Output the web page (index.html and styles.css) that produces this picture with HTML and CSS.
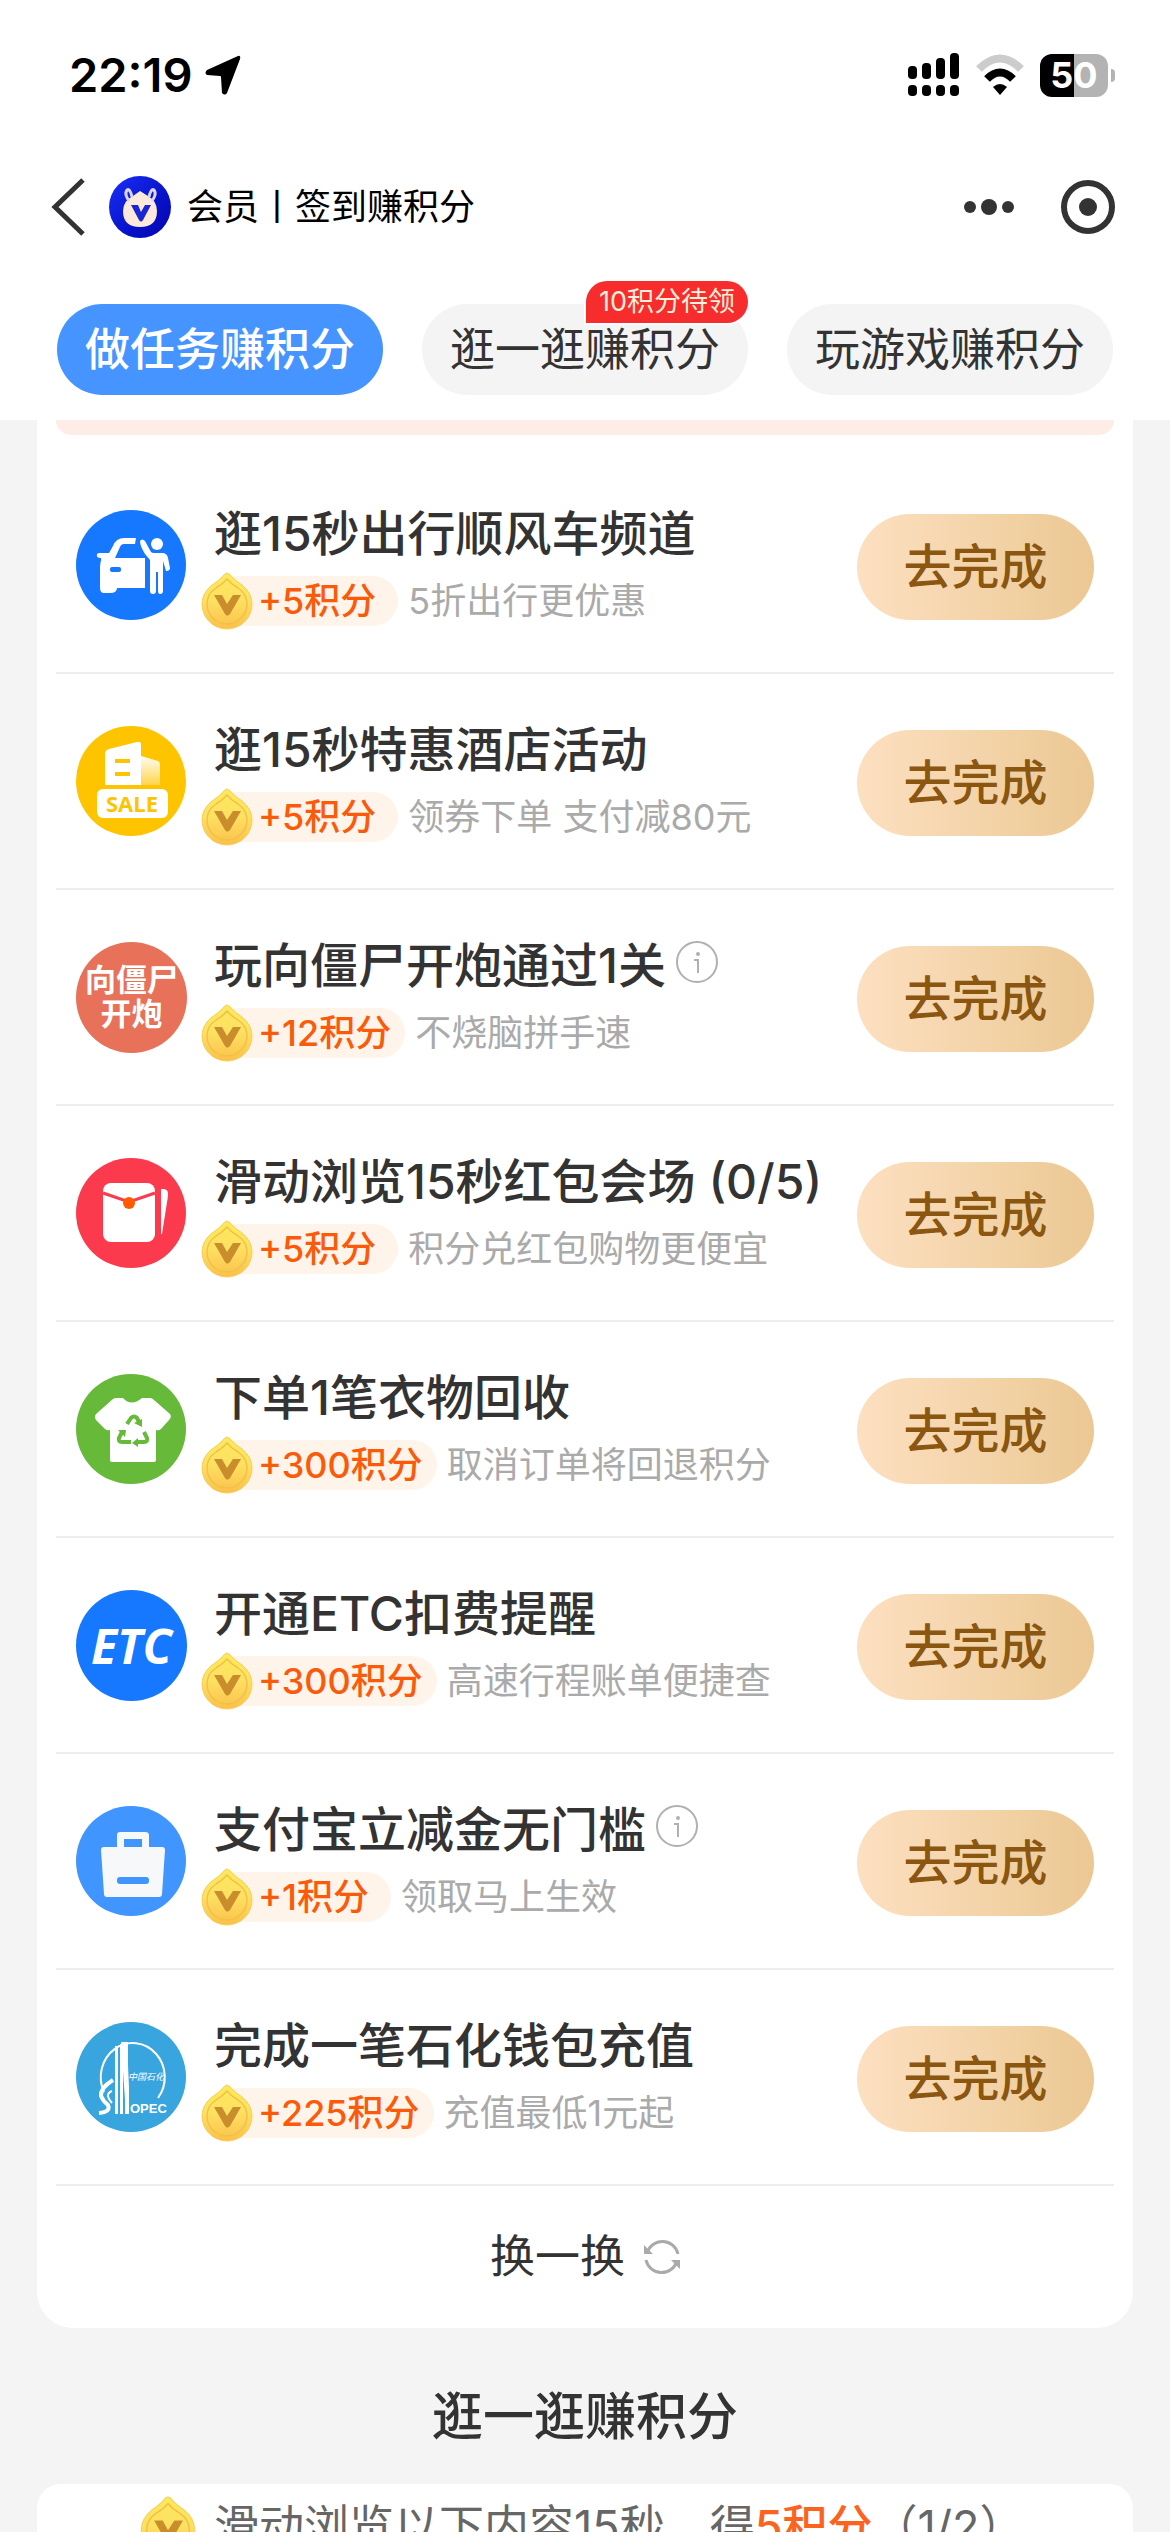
FILE: index.html
```html
<!DOCTYPE html>
<html lang="zh-CN">
<head>
<meta charset="utf-8">
<meta name="viewport" content="width=device-width, initial-scale=1">
<title>会员丨签到赚积分</title>
<link rel="stylesheet" href="styles.css">
</head>
<body>
<svg class="defs" aria-hidden="true">
  <defs>
    <linearGradient id="coinFill" x1="0" y1="0" x2="0" y2="1">
      <stop offset="0" stop-color="#fbe95c"/><stop offset="0.5" stop-color="#fce062"/><stop offset="1" stop-color="#fcc04a"/>
    </linearGradient>
    <linearGradient id="hotelWing" x1="0" y1="0" x2="0" y2="1">
      <stop offset="0" stop-color="#fff" stop-opacity="0.95"/><stop offset="1" stop-color="#fff" stop-opacity="0.3"/>
    </linearGradient>
    <linearGradient id="memberFill" x1="0" y1="0" x2="1" y2="1">
      <stop offset="0" stop-color="#1b30f8"/><stop offset="0.6" stop-color="#0711c8"/><stop offset="1" stop-color="#0508b0"/>
    </linearGradient>
    <symbol id="coin" viewBox="0 0 52 58">
      <path d="M26 1Q28 1 31 5Q35 9 41 13Q51 21 51 32A25 25 0 0 1 1 32Q1 21 11 13Q17 9 21 5Q24 1 26 1Z" fill="url(#coinFill)" stroke="#f6cf58" stroke-width="1"/>
      <path d="M26 7Q30 12 37 16Q46 22 46 32A20 20 0 0 1 6 32Q6 22 15 16Q22 12 26 7Z" fill="none" stroke="#f2c247" stroke-width="1.5"/>
      <path d="M13 23H21L26 32L32 23H40L29 42Q26 45 24 42Z" fill="#c98d2c"/>
    </symbol>
    <symbol id="info" viewBox="0 0 42 42">
      <circle cx="21" cy="21" r="20" fill="none" stroke="#b0b0b0" stroke-width="2"/>
      <circle cx="22" cy="13" r="2" fill="#b0b0b0"/><path d="M18 19H22V32" fill="none" stroke="#b0b0b0" stroke-width="2"/>
    </symbol>
  </defs>
</svg>

<header class="top">
  <div class="status">
    <div class="clock"><span>22:19</span>
      <svg class="arrow" viewBox="0 0 36 40" aria-hidden="true"><path d="M33 1Q36 0 35 4L22 38Q20 41 17 38L16 22Q16 21 15 21L2 20Q-1 18 2 15Z"/></svg>
    </div>
    <div class="signals">
      <svg class="cell" viewBox="0 0 52 44" aria-hidden="true">
        <rect x="0" y="13" width="9" height="13" rx="4"/><rect x="14" y="10" width="9" height="16" rx="4"/><rect x="28" y="5" width="9" height="21" rx="4"/><rect x="42" y="0" width="9" height="26" rx="4"/>
        <rect x="0" y="32" width="9" height="11" rx="4"/><rect x="14" y="32" width="9" height="11" rx="4"/><rect x="28" y="32" width="9" height="11" rx="4"/><rect x="42" y="32" width="9" height="11" rx="4"/>
      </svg>
      <svg class="wifi" viewBox="0 0 48 42" aria-hidden="true">
        <path d="M3 15Q24 -6 45 15" fill="none" stroke="#ccc" stroke-width="8"/>
        <path d="M11 25Q24 12 37 25" fill="none" stroke="#000" stroke-width="8"/>
        <path d="M17 33Q24 27 31 33L24 41Z"/>
      </svg>
      <div class="battery"><span>50</span></div>
    </div>
  </div>

  <div class="nav">
    <button class="icon-btn" aria-label="返回"><svg class="back" viewBox="0 0 34 58"><path d="M32 2L4 29L32 56" fill="none" stroke="#333" stroke-width="5"/></svg></button>
    <svg class="member" viewBox="0 0 62 62" aria-hidden="true">
      <circle cx="31" cy="31" r="31" fill="url(#memberFill)"/>
      <path d="M24 20L31 15L39 20Q48 25 48 35Q48 51 31 51Q14 51 14 35Q14 25 24 20Z" fill="#fbe9dc"/>
      <path d="M20 25Q15 18 18 14Q21 12 23 21M43 25Q48 18 45 14Q42 12 40 21" fill="none" stroke="#d9d6f4" stroke-width="3"/>
      <path d="M22 29H29L32 36L36 29H42L34 44Q32 47 30 44Z" fill="#1a25d4"/>
    </svg>
    <h1>会员丨签到赚积分</h1>
    <button class="icon-btn more" aria-label="更多"><svg viewBox="0 0 52 16"><circle cx="7" cy="8" r="6"/><circle cx="26" cy="8" r="8"/><circle cx="45" cy="8" r="6"/></svg></button>
    <button class="icon-btn target" aria-label="关闭"><svg viewBox="0 0 54 54"><circle cx="27" cy="27" r="24" fill="none" stroke="#333" stroke-width="6"/><circle cx="27" cy="27" r="9"/></svg></button>
  </div>

  <nav class="tabs">
    <button class="tab active">做任务赚积分</button>
    <button class="tab">逛一逛赚积分<span class="badge">10积分待领</span></button>
    <button class="tab">玩游戏赚积分</button>
  </nav>
</header>

<main>
  <section class="card tasks">
    <div class="banner"></div>
    <ul>
      <li class="task">
        <svg class="logo" viewBox="0 0 111 111" aria-hidden="true">
          <circle cx="55" cy="55" r="55" fill="#1677ff"/>
          <path d="M60 28H48Q40 28 37 36L33 43H24Q20 43 21 46Q21 48 26 48Q24 52 24 57V78Q24 83 28 83H34Q41 83 41 78H69V48H39L44 37Q45 34 48 34H59Z" fill="#fff"/>
          <path d="M25 48H66Q69 48 69 51V78H40L25 70Z" fill="#fff"/>
          <rect x="34" y="57" width="11" height="5" rx="2" fill="#1677ff"/>
          <circle cx="81" cy="34" r="6" fill="#fff"/>
          <path d="M64 31Q66 28 69 31L75 42Q76 43 78 43H86Q91 43 92 48L94 58Q94 61 90 61L87 51V81Q87 84 84 84Q82 84 82 81V62H80V81Q80 84 77 84Q74 84 74 81V50L69 44Q64 36 64 31Z" fill="#fff"/>
        </svg>
        <div class="body"><h2>逛15秒出行顺风车频道</h2><p><svg class="coin"><use href="#coin"/></svg><span class="chip short">+5积分</span><span class="desc">5折出行更优惠</span></p></div>
        <button class="go">去完成</button>
      </li>
      <li class="task">
        <svg class="logo" viewBox="0 0 111 111" aria-hidden="true">
          <circle cx="55" cy="55" r="55" fill="#fec400"/>
          <path d="M29 59V28Q29 24 33 23L61 16Q65 15 65 19V59Z" fill="#fff"/>
          <path d="M65 30L82 35Q84 36 84 38V59H65Z" fill="url(#hotelWing)"/>
          <path d="M39 35H54M39 48H54" stroke="#fec400" stroke-width="4"/>
          <rect x="21" y="63" width="71" height="29" rx="6" fill="#fff"/>
          <text x="56" y="86" text-anchor="middle" class="sale">SALE</text>
        </svg>
        <div class="body"><h2>逛15秒特惠酒店活动</h2><p><svg class="coin"><use href="#coin"/></svg><span class="chip short">+5积分</span><span class="desc">领券下单 支付减80元</span></p></div>
        <button class="go">去完成</button>
      </li>
      <li class="task">
        <div class="logo zombie"><span>向僵尸</span><span>开炮</span></div>
        <div class="body"><h2>玩向僵尸开炮通过1关<svg class="info"><use href="#info"/></svg></h2><p><svg class="coin"><use href="#coin"/></svg><span class="chip">+12积分</span><span class="desc">不烧脑拼手速</span></p></div>
        <button class="go">去完成</button>
      </li>
      <li class="task">
        <svg class="logo" viewBox="0 0 111 111" aria-hidden="true">
          <circle cx="55" cy="55" r="55" fill="#fb3a4e"/>
          <rect x="27" y="25" width="52" height="59" rx="8" fill="#fff"/>
          <path d="M27 35L53 44L79 35" fill="none" stroke="#fb3a4e" stroke-width="3"/>
          <circle cx="53" cy="45" r="6" fill="#ff5a00"/>
          <path d="M85 31H88Q93 32 92 38L86 76H85Z" fill="#fff"/>
        </svg>
        <div class="body"><h2>滑动浏览15秒红包会场 (0/5)</h2><p><svg class="coin"><use href="#coin"/></svg><span class="chip short">+5积分</span><span class="desc">积分兑红包购物更便宜</span></p></div>
        <button class="go">去完成</button>
      </li>
      <li class="task">
        <svg class="logo" viewBox="0 0 111 111" aria-hidden="true">
          <circle cx="55" cy="55" r="55" fill="#67b93a"/>
          <path d="M37 25Q38 24 41 24H47Q55 33 66 24H74Q76 24 78 26L94 40Q96 43 93 46L85 55Q83 57 80 56V86Q80 88 78 88H36Q34 88 34 86V56Q31 57 29 55L20 46Q18 43 20 40Z" fill="#fff"/>
          <g fill="none" stroke="#67b93a" stroke-width="4"><path d="M51 50L55 44Q58 41 61 44L63 48"/><path d="M68 58L71 64Q72 68 68 68H61"/><path d="M55 68H46Q42 68 43 64L46 58"/></g>
          <path d="M58 49L66 45V53ZM62 64V73L56 69ZM42 56H50L49 63Z" fill="#67b93a"/>
        </svg>
        <div class="body"><h2>下单1笔衣物回收</h2><p><svg class="coin"><use href="#coin"/></svg><span class="chip">+300积分</span><span class="desc">取消订单将回退积分</span></p></div>
        <button class="go">去完成</button>
      </li>
      <li class="task">
        <div class="logo etc"><span>ETC</span></div>
        <div class="body"><h2>开通ETC扣费提醒</h2><p><svg class="coin"><use href="#coin"/></svg><span class="chip">+300积分</span><span class="desc">高速行程账单便捷查</span></p></div>
        <button class="go">去完成</button>
      </li>
      <li class="task">
        <svg class="logo" viewBox="0 0 111 111" aria-hidden="true">
          <circle cx="55" cy="55" r="55" fill="#4095ff"/>
          <path d="M41 29Q41 26 44 26H69Q73 26 73 29V41H86Q89 41 89 44L86 88Q86 91 83 91H31Q28 91 28 88L25 44Q25 41 28 41H41ZM48 33V41H66V33Z" fill="#f7f8fa" fill-rule="evenodd"/>
          <rect x="41" y="71" width="32" height="7" rx="3" fill="#4095ff"/>
        </svg>
        <div class="body"><h2>支付宝立减金无门槛<svg class="info"><use href="#info"/></svg></h2><p><svg class="coin"><use href="#coin"/></svg><span class="chip short">+1积分</span><span class="desc">领取马上生效</span></p></div>
        <button class="go">去完成</button>
      </li>
      <li class="task">
        <svg class="logo" viewBox="0 0 111 111" aria-hidden="true">
          <circle cx="55" cy="55" r="55" fill="#39a5df"/>
          <path d="M28 70A32 34 0 1 1 82 76" fill="none" stroke="#fff" stroke-width="2"/>
          <path d="M39 24H42V92H39ZM44 22H47V92H44ZM49 20H52V92H49Z" fill="#fff"/>
          <path d="M45 20H51L53 66V92H50Z" fill="#fff"/>
          <path d="M37 58Q24 66 25 74Q27 79 32 83Q35 90 23 91" fill="none" stroke="#fff" stroke-width="4"/>
          <path d="M36 69Q28 72 36 81" fill="none" stroke="#fff" stroke-width="2"/>
          <text x="52" y="58" class="sino-cn">中国石化</text>
          <text x="54" y="91" class="sino-en">OPEC</text>
        </svg>
        <div class="body"><h2>完成一笔石化钱包充值</h2><p><svg class="coin"><use href="#coin"/></svg><span class="chip">+225积分</span><span class="desc">充值最低1元起</span></p></div>
        <button class="go">去完成</button>
      </li>
    </ul>
    <button class="refresh">换一换
      <svg viewBox="0 0 36 36" aria-hidden="true"><g fill="none" stroke="#aaa" stroke-width="3"><path d="M3 14A16 16 0 0 1 34 15"/><path d="M33 22A16 16 0 0 1 2 21"/></g><path d="M0 6V15H9ZM36 30V21H27Z" fill="#aaa"/></svg>
    </button>
  </section>

  <h2 class="section-title">逛一逛赚积分</h2>

  <section class="card browse">
    <svg class="coin big"><use href="#coin"/></svg>
    <p>滑动浏览以下内容15秒，得<b>5积分</b>（1/2）</p>
  </section>
</main>
</body>
</html>
```
FILE: styles.css
```css
* { box-sizing: border-box; }
html, body { margin: 0; height: 100%; }
body {
  display: flex;
  flex-direction: column;
  overflow: hidden;
  background: #f4f4f4;
  color: #333;
  font-family: Inter, "Noto Sans CJK SC", sans-serif;
}
h1, h2, p, ul { margin: 0; padding: 0; }
ul { list-style: none; }
svg { display: block; flex: none; }
button { border: 0; padding: 0; background: none; color: inherit; font: inherit; }
.defs { position: absolute; width: 0; height: 0; }

.top { flex: none; background: #fff; padding: 40px 57px 25px; }

.status { display: flex; justify-content: space-between; align-items: center; height: 70px; padding: 0 0 0 12px; }
.clock { display: flex; align-items: center; gap: 12px; color: #000; font-size: 47px; font-weight: 600; line-height: 70px; }
.arrow { width: 36px; height: 40px; }
.signals { display: flex; align-items: center; gap: 16px; }
.cell { width: 52px; height: 44px; }
.wifi { width: 48px; height: 42px; }
.battery {
  position: relative;
  width: 68px;
  height: 43px;
  margin-right: 5px;
  border-radius: 12px;
  background: linear-gradient(90deg, #000 50%, #b3b3b3 50%);
  color: #fff;
  font-size: 36px;
  font-weight: 700;
  line-height: 43px;
  text-align: center;
}
.battery::after {
  content: "";
  position: absolute;
  left: 71px;
  top: 15px;
  width: 4px;
  height: 13px;
  border-radius: 0 4px 4px 0;
  background: #b3b3b3;
}

.nav { display: flex; align-items: center; height: 62px; margin: 66px -2px 66px -6px; }
.back { width: 34px; height: 58px; }
.member { width: 62px; height: 62px; margin: 0 16px 0 24px; }
.nav h1 { flex: 1; color: #000; font-size: 36px; font-weight: 400; line-height: 48px; }
.icon-btn { flex: none; }
.more svg { width: 52px; height: 16px; }
.target svg { width: 54px; height: 54px; }
.icon-btn circle { fill: #333; }
.icon-btn circle[fill="none"] { fill: none; }
.target { margin: 0 0 0 46px; }

.tabs { display: grid; grid-template-columns: repeat(3, 1fr); gap: 39px; }
.tab { position: relative; height: 91px; border-radius: 46px; background: #f4f4f4; font-size: 45px; line-height: 91px; white-space: nowrap; }
.tab.active { background: #4694ff; color: #fff; font-weight: 500; }
.badge {
  position: absolute;
  right: 0;
  top: -23px;
  height: 42px;
  padding: 0 13px;
  border-radius: 21px 21px 21px 0;
  background: #f72c2c;
  box-shadow: 0 0 0 2px #fff;
  color: #fff0dc;
  font-size: 27px;
  line-height: 42px;
}

main { flex: 1; padding: 0 37px; }
.card { background: #fff; }
.tasks { padding: 0 19px; border-radius: 0 0 36px 36px; }
.banner { height: 15px; margin-bottom: 23px; border-radius: 0 0 24px 24px; background: #feede7; }

.task { display: flex; align-items: center; height: 216px; padding: 4px 20px 0; border-bottom: 2px solid #eee; }
.logo { flex: none; width: 111px; height: 111px; margin-bottom: 4px; }
.body { flex: 1; min-width: 0; padding-left: 14px; }
.body h2 { display: flex; align-items: center; gap: 10px; padding-left: 13px; margin-bottom: 8px; font-size: 48px; font-weight: 500; line-height: 60px; white-space: nowrap; }
.info { width: 42px; height: 42px; margin-bottom: 8px; }
.body p { display: flex; align-items: center; height: 58px; font-size: 36px; line-height: 50px; white-space: nowrap; }
.coin { position: relative; width: 52px; height: 58px; }
.chip { margin-left: -26px; padding: 0 14px 0 31px; border-radius: 0 25px 25px 0; background: #fff4ea; color: #fa5a0a; font-weight: 500; }
.chip.short { padding-right: 22px; }
.desc { margin-left: 10px; color: #aaa; }
.go { flex: none; width: 237px; height: 106px; border-radius: 53px; background: linear-gradient(90deg, #fde0c1, #ebc893); color: #8a5610; font-size: 48px; font-weight: 500; line-height: 106px; }

.zombie { display: flex; flex-direction: column; justify-content: center; align-items: center; border-radius: 50%; background: #e77159; color: #fff; font-size: 31px; font-weight: 700; line-height: 34px; white-space: nowrap; }
.etc { display: flex; justify-content: center; align-items: center; border-radius: 50%; background: #1677ff; color: #fff; font-family: "Open Sans", sans-serif; font-size: 48px; font-weight: 700; font-style: italic; }
.sale { font: 700 22px "Open Sans", sans-serif; fill: #fec400; }
.sino-cn { font: italic 400 9px "Noto Sans CJK SC", sans-serif; fill: #fff; }
.sino-en { font: 700 13px "Liberation Sans", sans-serif; fill: #fff; }

.refresh { display: flex; justify-content: center; align-items: center; gap: 19px; width: 100%; height: 142px; font-size: 45px; line-height: 60px; }
.refresh svg { width: 36px; height: 36px; }

.section-title { padding: 59px 0 37px; font-size: 51px; font-weight: 500; line-height: 60px; text-align: center; }

.browse { display: flex; align-items: center; gap: 18px; padding: 12px 103px; border-radius: 24px; color: #666; font-size: 45px; line-height: 60px; white-space: nowrap; }
.browse b { color: #fa641e; font-weight: 500; }
.big { width: 56px; height: 62px; }
```
